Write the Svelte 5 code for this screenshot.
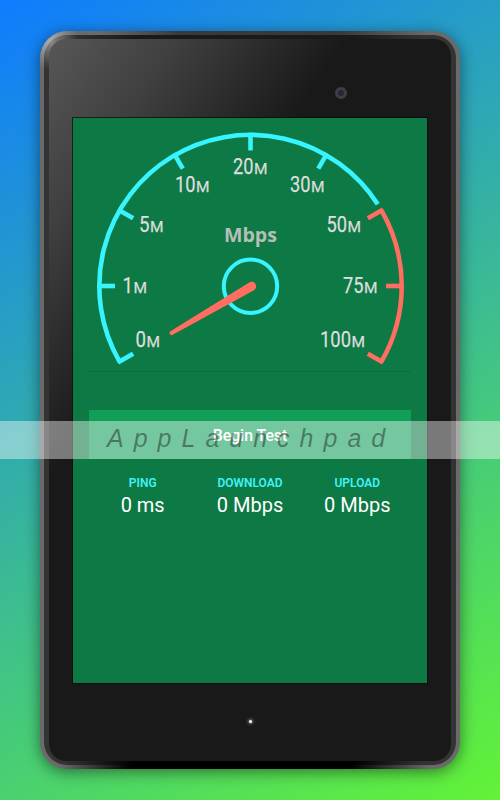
<script>

// angles in degrees, counter-clockwise from 3 o'clock
const marks = [
	{ n: '0',   angle: 210, x: 135.5, y: 347, w: 10.5 },
	{ n: '1',   angle: 180, x: 122.5, y: 293, w: 10.5 },
	{ n: '5',   angle: 150, x: 139, y: 231.5, w: 10.5 },
	{ n: '10',  angle: 120, x: 175, y: 191.5, w: 20.5 },
	{ n: '20',  angle: 90,  x: 233, y: 173.5, w: 20.5 },
	{ n: '30',  angle: 60,  x: 290, y: 191.5, w: 20.5 },
	{ n: '50',  angle: 30,  x: 326.5, y: 231.5, w: 20.5, hot: true },
	{ n: '75',  angle: 0,   x: 343, y: 293, w: 20.5, hot: true },
	{ n: '100', angle: -30, x: 320, y: 347, w: 31, hot: true },
];

const stats = [
	{ label: 'PING', value: '0 ms' },
	{ label: 'DOWNLOAD', value: '0 Mbps' },
	{ label: 'UPLOAD', value: '0 Mbps' },
];

const cx = 250.5;
const cy = 286;
const r = 151.2;

function pt(angle, radius) {
	const a = angle * Math.PI / 180;
	return (cx + radius * Math.cos(a)).toFixed(2) + ' ' + (cy - radius * Math.sin(a)).toFixed(2);
}

</script>

<style>
	:global(body) { margin:0 }
	.page {
		position: relative;
		box-sizing: border-box;
		width: 500px;
		height: 800px;
		padding: 31px 40px;
		overflow: hidden;
		background: linear-gradient(148deg, #0f7bff, #62f336);
		font-family: Roboto, sans-serif;
	}
	.tablet {
		box-sizing: border-box;
		height: 738px;
		padding: 4px;
		border-radius: 27px;
		background:
			linear-gradient(90deg, transparent 20px, #000 90px, #000 310px, transparent 390px) bottom / 100% 4px no-repeat,
			radial-gradient(circle at 10px 10px, #aaa, transparent 28px),
			linear-gradient(90deg, transparent 60px, #393939 140px, #393939 300px, transparent 390px) top / 100% 4px no-repeat,
			#6a6a6a;
		box-shadow: 0 3px 15px rgba(0,0,0,.48);
	}
	.rim {
		box-sizing: border-box;
		height: 730px;
		padding: 4px 5px;
		border-radius: 23px;
		background:
			linear-gradient(90deg, transparent 20px, #000 90px, #000 310px, transparent 380px) bottom / 100% 4px no-repeat,
			radial-gradient(circle at 8px 8px, #888, transparent 26px),
			linear-gradient(90deg, transparent 20px, #1a1a1a 90px, #1a1a1a 310px, transparent 380px) top / 100% 4px no-repeat,
			#333;
	}
	.face {
		display: flex;
		flex-direction: column;
		align-items: center;
		height: 722px;
		border-radius: 17px;
		background: linear-gradient(124deg, #575757 0, #404040 105px, #191919 248px);
	}
	.camera {
		box-sizing: border-box;
		width: 12px;
		height: 12px;
		margin: 48px 0 19px 182px;
		border: 3px solid #3f3f3f;
		border-radius: 50%;
		background: #25253f;
	}
	.screen {
		width: 354px;
		height: 565px;
		background: #0d7944;
		box-shadow: 0 0 0 1px rgba(12,8,12,.7);
	}
	.gauge { display:block }
	.gauge text { fill:#dedede; stroke:#dedede; stroke-width:.25px }
	.gauge .unit { fill:#b5bfb8; stroke:none; font:bold 20px "Open Sans", sans-serif }
	hr {
		height: 1px;
		margin: 0 16px;
		border: 0;
		background: #0b6d3d;
	}
	button {
		display: block;
		width: 322px;
		height: 49px;
		margin: 38px 16px 0;
		padding: 2px 0 0;
		border: 0;
		background: #119f58;
		color: #fff;
		font: 500 15.8px Roboto, sans-serif;
	}
	.stats {
		display: grid;
		grid-template-columns: repeat(3, 1fr);
		margin: 17px 16px 0;
		text-align: center;
	}
	.stats span { display:block; color:#3ff2f7; font-size:12px; font-weight:600; line-height:14px }
	.stats strong { display:block; margin-top:3px; color:#fff; font-size:20px; font-weight:400; line-height:24px }
	.led {
		width: 3px;
		height: 3px;
		margin-top: 37px;
		border-radius: 50%;
		background: #fff;
		box-shadow: 0 0 3px 1px #777;
	}
	.watermark {
		position: absolute;
		top: 421px;
		left: 0;
		box-sizing: border-box;
		width: 500px;
		height: 38px;
		padding-left: 107px;
		background: rgba(255,255,255,.42);
		color: rgba(30,30,30,.47);
		font: italic 25px/35px "Liberation Sans", Arial, sans-serif;
		letter-spacing: 10px;
		white-space: nowrap;
	}
</style>

<div class="page">
	<div class="tablet">
		<div class="rim">
			<div class="face">
				<div class="camera"></div>
				<div class="screen">
					<svg class="gauge" width="354" height="253" viewBox="73 118 354 253">
						<g fill="none" stroke="#37f4ff" stroke-width="4.6">
							<path d="M{pt(210, r)} A{r} {r} 0 0 1 {pt(32.7, r)}" />
							<circle {cx} cy="286.2" r="26.7" stroke-width="4" />
						</g>
						<path d="M{pt(30, r)} A{r} {r} 0 0 1 {pt(-30, r)}" fill="none" stroke="#ff6e61" stroke-width="4.6" />
						{#each marks as m}
							<path
								d="M{pt(m.angle, r + 2)} L{pt(m.angle, 135.5)}"
								stroke={m.hot ? '#ff6e61' : '#37f4ff'}
								stroke-width="4.6"
							/>
							<text x={m.x} y={m.y} font-size="21.5" textLength={m.w} lengthAdjust="spacingAndGlyphs">{m.n}</text>
							<text x={m.x + m.w + .5} y={m.y} font-size="15.5" textLength="13.5" lengthAdjust="spacingAndGlyphs">M</text>
						{/each}
						<text class="unit" x="224" y="242" textLength="53" lengthAdjust="spacingAndGlyphs">Mbps</text>
						<path d="M249.2 282.4 L170 331.5 Q168.4 334.6 171.8 335.2 L254 290.2 A4.4 4.4 0 0 0 249.2 282.4 Z" fill="#ff6e61" />
					</svg>
					<hr>
					<button>Begin Test</button>
					<div class="stats">
						{#each stats as s}
							<div>
								<span>{s.label}</span>
								<strong>{s.value}</strong>
							</div>
						{/each}
					</div>
				</div>
				<div class="led"></div>
			</div>
		</div>
	</div>
	<div class="watermark">AppLaunchpad</div>
</div>
